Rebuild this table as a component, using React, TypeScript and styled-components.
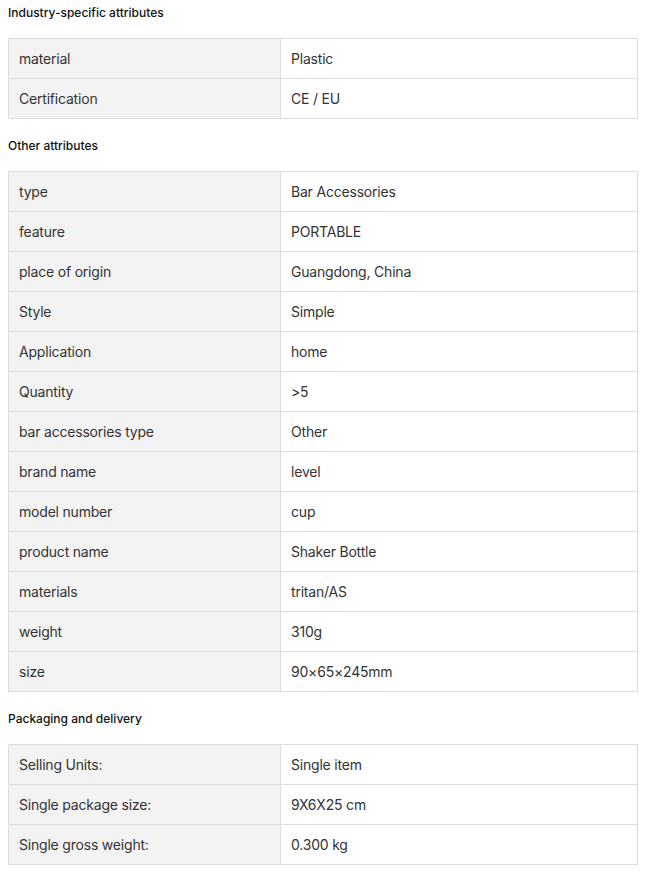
import React from "react";
import styled, { createGlobalStyle } from "styled-components";

const Global = createGlobalStyle`
  html, body { margin: 0; padding: 0; background: #ffffff; }
  body { font-family: Inter, "Noto Sans", "Liberation Sans", sans-serif; }
  * { box-sizing: border-box; }
`;

const Page = styled.div`
  padding: 4px 8px 8px 8px;
  width: 646px;
`;

const Section = styled.section`
  margin-bottom: 18px;
`;

const SectionTitle = styled.h3`
  margin: 0 0 16px 0;
  font-size: 12px;
  line-height: 18px;
  font-weight: 500;
  color: #111111;
`;

const Table = styled.div`
  display: grid;
  grid-template-columns: 272px 1fr;
  width: 630px;
  border-top: 1px solid #dddddd;
  border-left: 1px solid #dddddd;
`;

const Cell = styled.div<{ $key?: boolean }>`
  height: 40px;
  display: flex;
  align-items: center;
  padding: 0 10px;
  border-right: 1px solid #dddddd;
  border-bottom: 1px solid #dddddd;
  background: ${(p) => (p.$key ? "#f3f3f3" : "#ffffff")};
  font-size: 14px;
  letter-spacing: -0.2px;
  color: #333333;
  white-space: nowrap;
`;

type Row = [string, string];

const sections: { title: string; rows: Row[] }[] = [
  {
    title: "Industry-specific attributes",
    rows: [
      ["material", "Plastic"],
      ["Certification", "CE / EU"],
    ],
  },
  {
    title: "Other attributes",
    rows: [
      ["type", "Bar Accessories"],
      ["feature", "PORTABLE"],
      ["place of origin", "Guangdong, China"],
      ["Style", "Simple"],
      ["Application", "home"],
      ["Quantity", ">5"],
      ["bar accessories type", "Other"],
      ["brand name", "level"],
      ["model number", "cup"],
      ["product name", "Shaker Bottle"],
      ["materials", "tritan/AS"],
      ["weight", "310g"],
      ["size", "90×65×245mm"],
    ],
  },
  {
    title: "Packaging and delivery",
    rows: [
      ["Selling Units:", "Single item"],
      ["Single package size:", "9X6X25 cm"],
      ["Single gross weight:", "0.300 kg"],
    ],
  },
];

export default function App() {
  return (
    <>
      <Global />
      <Page>
        {sections.map((s) => (
          <Section key={s.title}>
            <SectionTitle>{s.title}</SectionTitle>
            <Table>
              {s.rows.map(([k, v]) => (
                <React.Fragment key={k}>
                  <Cell $key>{k}</Cell>
                  <Cell>{v}</Cell>
                </React.Fragment>
              ))}
            </Table>
          </Section>
        ))}
      </Page>
    </>
  );
}
